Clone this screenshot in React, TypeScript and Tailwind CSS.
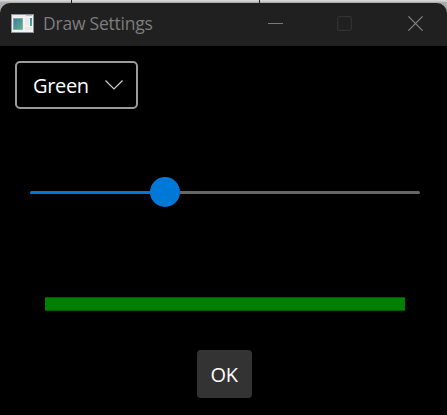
function WindowIcon() {
  return (
    <svg width="23" height="19" viewBox="0 0 23 19" className="mb-[3px] shrink-0">
      <defs>
        <linearGradient id="pane" x1="0" y1="0" x2="1" y2="1">
          <stop offset="0" stopColor="#4078a8" />
          <stop offset="1" stopColor="#5cb486" />
        </linearGradient>
      </defs>
      <rect x="0.5" y="0.5" width="22" height="18" fill="#f2f2f3" stroke="#8c9199" />
      <rect x="1" y="1" width="21" height="2" fill="#e9edf1" />
      <rect x="15" y="1" width="6" height="1" fill="#b5bec9" />
      <rect x="2.5" y="4.5" width="9" height="11" fill="url(#pane)" stroke="#6f9a9c" strokeWidth="0.6" />
      <rect x="14" y="4" width="4" height="7" fill="#e8ebe6" />
      <rect x="19" y="4" width="2" height="8" fill="url(#pane)" />
      <rect x="14" y="13" width="7" height="3" fill="#e7e9e8" />
    </svg>
  );
}

function TitleBar() {
  return (
    <header className="flex h-[43px] shrink-0 items-center rounded-t-[10px] bg-[#202020] pl-[11px]">
      <WindowIcon />
      <span className="mb-[3px] ml-[9px] w-[120px] whitespace-nowrap text-[17.5px] leading-6 tracking-[-0.22px] text-[#7d7d7d]">
        Draw Settings
      </span>
      <div className="mb-[2px] ml-auto flex items-center pr-[24px]">
        <svg width="15" height="15" viewBox="0 0 15 15" fill="none" stroke="#7a7a7a">
          <path d="M0 7.5H15" />
        </svg>
        <svg width="15" height="15" viewBox="0 0 15 15" fill="none" stroke="#323232" strokeWidth="1.3" className="ml-[54px]">
          <rect x="0.7" y="0.7" width="13.6" height="13.6" rx="1.5" />
        </svg>
        <svg width="15" height="15" viewBox="0 0 15 15" fill="none" stroke="#858585" strokeWidth="1.2" className="ml-[56px]">
          <path d="M0.4 0.4L14.6 14.6M14.6 0.4L0.4 14.6" />
        </svg>
      </div>
    </header>
  );
}

export default function App() {
  return (
    <div className="flex h-[415px] w-[447px] flex-col overflow-hidden bg-black font-['Open_Sans','Noto_Sans',sans-serif]">
      <div className="h-[46px] shrink-0 bg-[linear-gradient(#d6d6d6_0,#d6d6d6_1px,#b4b4b4_2px,#aaa_3px)]">
        <div className="flex h-[3px]">
          <div className="ml-[71px] h-[3px] w-px bg-[#222]" />
          <div className="ml-[187px] h-[3px] w-px bg-[#222]" />
        </div>
        <TitleBar />
      </div>
      <main className="flex flex-1 flex-col">
        <button className="ml-[15px] mt-[15px] flex h-12 w-[123px] items-center rounded-[5px] border-2 border-[#9b9b9b] pl-4 text-white">
          <span className="mt-[2px] w-[56px] text-left text-[20px] leading-6 tracking-[-0.35px]">Green</span>
          <svg width="18" height="10" viewBox="0 0 18 10" fill="none" stroke="#d0d0d0" strokeWidth="1.2" className="ml-4">
            <path d="M0.5 0.5L9 9L17.5 0.5" />
          </svg>
        </button>
        <div className="ml-[30px] mt-[68px] flex h-[30px] w-[390px] items-center">
          <div className="h-[3px] w-[120px] rounded-l-sm bg-[#0078d7]" />
          <div className="size-[30px] rounded-full bg-[#0078d7]" />
          <div className="h-[3px] flex-1 rounded-r-sm bg-[#666]" />
        </div>
        <div className="ml-[45px] mt-[90px] h-[14px] w-[360px] border-y border-[#005800] bg-[#008000]" />
        <button className="ml-[197px] mt-[39px] flex h-12 w-[55px] items-center justify-center rounded-[4px] bg-[#333] pr-[1px] pt-[2px] text-[20px] leading-6 tracking-[-0.3px] text-white">
          OK
        </button>
      </main>
    </div>
  );
}
